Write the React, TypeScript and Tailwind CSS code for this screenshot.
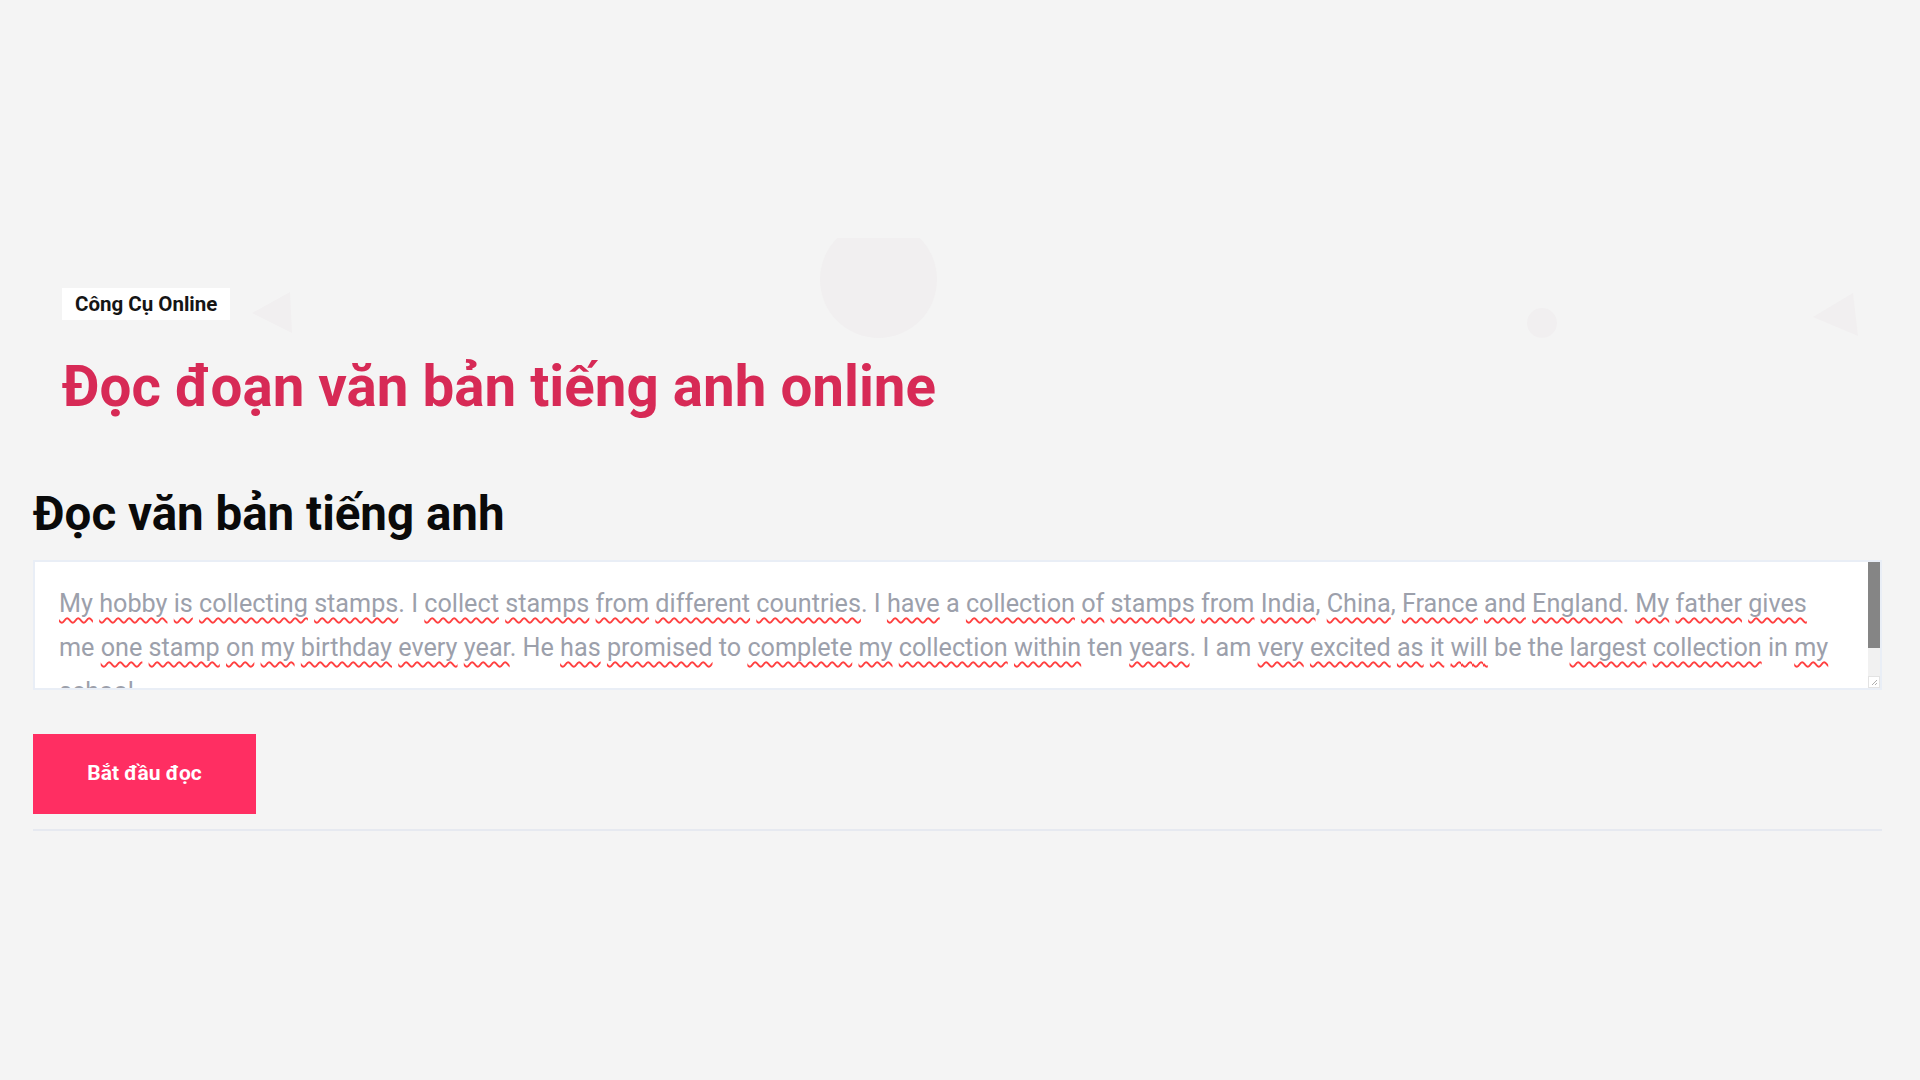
import React from "react";

const TEXT =
  "My hobby is collecting stamps. I collect stamps from different countries. I have a collection of stamps from India, China, France and England. My father gives me one stamp on my birthday every year. He has promised to complete my collection within ten years. I am very excited as it will be the largest collection in my school.";

const OK = new Set(["I", "a", "me", "He", "to", "ten", "am", "be", "the", "in"]);

function Word({ w }: { w: string }) {
  const m = w.match(/^([A-Za-z]+)(.*)$/);
  if (!m) return <>{w}</>;
  const [, core, rest] = m;
  if (OK.has(core)) return <>{w}</>;
  return (
    <>
      <span className="underline decoration-wavy decoration-[#ff4040] decoration-[1.5px] underline-offset-[5px] [text-decoration-skip-ink:none]">
        {core}
      </span>
      {rest}
    </>
  );
}

export default function App() {
  const words = TEXT.split(" ");
  return (
    <div className="min-h-screen bg-[#f4f4f4] font-['Roboto',sans-serif] pt-[238px]">
      <section className="relative overflow-hidden pl-[62px] pt-[50px] pb-[30px]">
        <div className="absolute left-[820px] top-[-17px] h-[117px] w-[117px] rounded-full bg-[#f1eff0]" />
        <div className="absolute left-[1527px] top-[70px] h-[30px] w-[30px] rounded-full bg-[#f1eff0]" />
        <svg className="absolute left-0 top-0" width="1920" height="120" viewBox="0 0 1920 120">
          <polygon points="252,75 290,54 292,95" fill="#f1eff0" />
          <polygon points="1813,79 1853,55 1858,98" fill="#f1eff0" />
        </svg>
        <div className="relative">
          <span className="inline-flex h-[32px] items-center bg-white px-[13px] text-[20.5px] font-bold text-[#151515]">
            Công Cụ Online
          </span>
          <h1 className="mt-[32px] text-[56.5px] font-bold leading-[70px] text-[#d72a56]">
            Đọc đoạn văn bản tiếng anh online
          </h1>
        </div>
      </section>
      <main className="pl-[33px] pr-[38px] pt-[34px]">
        <h2 className="text-[47.5px] font-bold leading-[57px] text-[#0a0a0a]">Đọc văn bản tiếng anh</h2>
        <div role="textbox" className="mt-[17px] flex h-[130px] border-2 border-[#e9eef6] bg-white">
          <div className="min-w-0 flex-1 overflow-hidden pl-[24px] pr-[28px] pt-[20px] text-[25.2px] leading-[44px] text-[#9ca0ab]">
            {words.map((w, i) => (
              <React.Fragment key={i}>
                <Word w={w} />
                {i < words.length - 1 ? " " : ""}
              </React.Fragment>
            ))}
          </div>
          <div className="flex w-[12px] shrink-0 flex-col">
            <div className="h-[86px] bg-[#858585]" />
            <div className="flex-1 bg-[#f1f1f1]" />
            <div className="flex h-[12px] items-center justify-center border border-[#e3e3e3] bg-white">
              <svg width="8" height="8" viewBox="0 0 8 8">
                <line x1="7" y1="2" x2="2" y2="7" stroke="#999" strokeWidth="0.8" />
                <line x1="7" y1="5" x2="5" y2="7" stroke="#999" strokeWidth="0.8" />
              </svg>
            </div>
          </div>
        </div>
        <button className="mt-[44px] flex h-[80px] w-[223px] items-center justify-center bg-[#ff2e62] text-[21px] font-bold text-white">
          Bắt đầu đọc
        </button>
        <div className="mt-[15px] h-[2px] bg-[#e6e9f0]" />
      </main>
    </div>
  );
}
